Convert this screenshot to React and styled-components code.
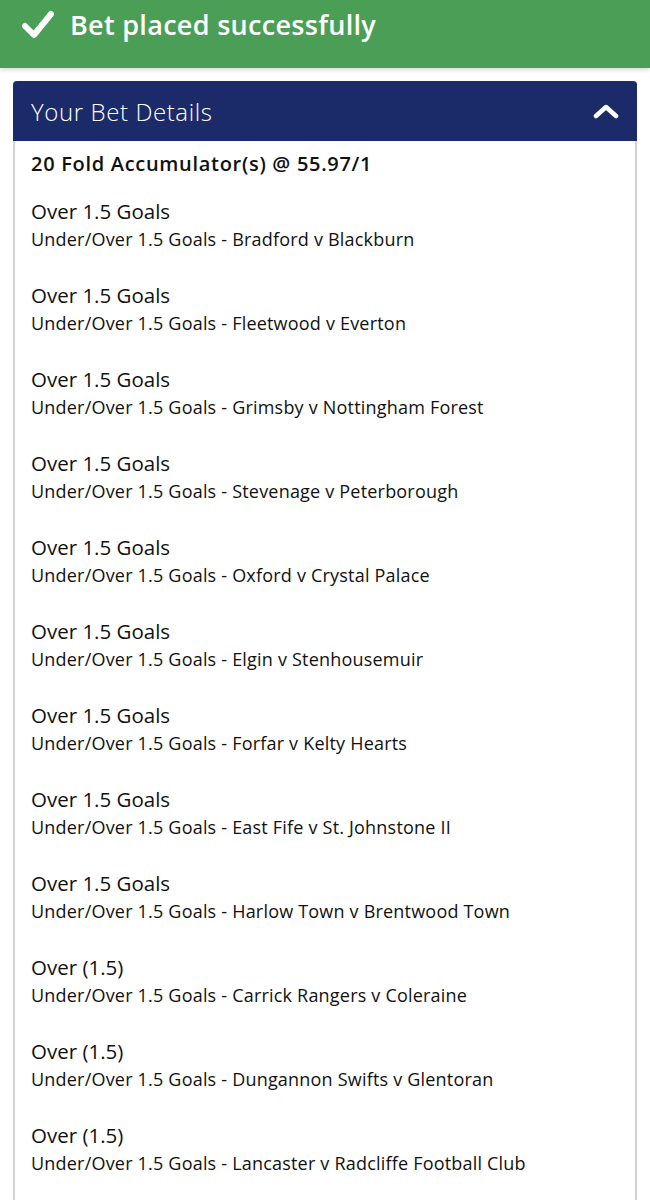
import React from "react";
import styled, { createGlobalStyle } from "styled-components";

///////////////////////////////////

const GlobalStyle = createGlobalStyle`
  html, body {
    margin: 0;
    padding: 0;
    background: #ffffff;
    font-family: "Open Sans", "Noto Sans", sans-serif;
  }
`;

const Banner = styled.div`
  background-color: #4a9e55;
  height: 68px;
  display: flex;
  align-items: center;
  padding: 0 22px;
  gap: 16px;
  box-shadow: 0 2px 4px rgba(0, 0, 0, 0.15);
  color: #ffffff;
`;

const BannerText = styled.span`
  font-size: 27px;
  font-weight: 600;
  letter-spacing: 0.3px;
  margin-top: -20px;
`;

const Check = styled.svg`
  width: 32px;
  height: 30px;
  margin-top: -18px;
`;

const Card = styled.div`
  margin: 13px 13px 0;
  border-radius: 4px 4px 0 0;
  overflow: hidden;
`;

const Header = styled.div`
  background-color: #1b2a69;
  height: 60px;
  display: flex;
  align-items: center;
  justify-content: space-between;
  padding: 0 18px;
  color: #ffffff;
`;

const HeaderTitle = styled.span`
  font-size: 24px;
  font-weight: 300;
  letter-spacing: 0.6px;
`;

const Body = styled.div`
  border-left: 2px solid #d2d2d6;
  border-right: 2px solid #d2d2d6;
  padding: 10px 16px 40px;
  color: #111111;
`;

const Summary = styled.div`
  font-size: 20px;
  font-weight: 600;
  letter-spacing: 0.7px;
  line-height: 26px;
  margin-bottom: 20px;
`;

const List = styled.div`
  display: flex;
  flex-direction: column;
  gap: 28px;
`;

const Selection = styled.div`
  display: flex;
  flex-direction: column;
`;

const Pick = styled.span`
  font-size: 20.5px;
  line-height: 28px;
`;

const Market = styled.span`
  font-size: 18px;
  letter-spacing: 0.2px;
  line-height: 28px;
`;

///////////////////////////////////

const selections = [
  ["Over 1.5 Goals", "Bradford v Blackburn"],
  ["Over 1.5 Goals", "Fleetwood v Everton"],
  ["Over 1.5 Goals", "Grimsby v Nottingham Forest"],
  ["Over 1.5 Goals", "Stevenage v Peterborough"],
  ["Over 1.5 Goals", "Oxford v Crystal Palace"],
  ["Over 1.5 Goals", "Elgin v Stenhousemuir"],
  ["Over 1.5 Goals", "Forfar v Kelty Hearts"],
  ["Over 1.5 Goals", "East Fife v St. Johnstone II"],
  ["Over 1.5 Goals", "Harlow Town v Brentwood Town"],
  ["Over (1.5)", "Carrick Rangers v Coleraine"],
  ["Over (1.5)", "Dungannon Swifts v Glentoran"],
  ["Over (1.5)", "Lancaster v Radcliffe Football Club"],
];

const App = () => {

  return (

    <>

      <GlobalStyle />

      <Banner>

        <Check viewBox="0 0 32 30">
          <path d="M3 16 L12 25 L29 4" fill="none" stroke="#fff" strokeWidth="6" strokeLinecap="round" strokeLinejoin="round" />
        </Check>

        <BannerText>Bet placed successfully</BannerText>

      </Banner>

      <Card>

        <Header>

          <HeaderTitle>Your Bet Details</HeaderTitle>

          <svg width="26" height="16" viewBox="0 0 26 16">
            <path d="M3 13 L13 4 L23 13" fill="none" stroke="#fff" strokeWidth="4.5" strokeLinecap="round" strokeLinejoin="round" />
          </svg>

        </Header>

        <Body>

          <Summary>20 Fold Accumulator(s) @ 55.97/1</Summary>

          <List>
            {selections.map(([pick, match], i) => (
              <Selection key={i}>
                <Pick>{pick}</Pick>
                <Market>Under/Over 1.5 Goals - {match}</Market>
              </Selection>
            ))}
          </List>

        </Body>

      </Card>

    </>

  );

};

export default App;
